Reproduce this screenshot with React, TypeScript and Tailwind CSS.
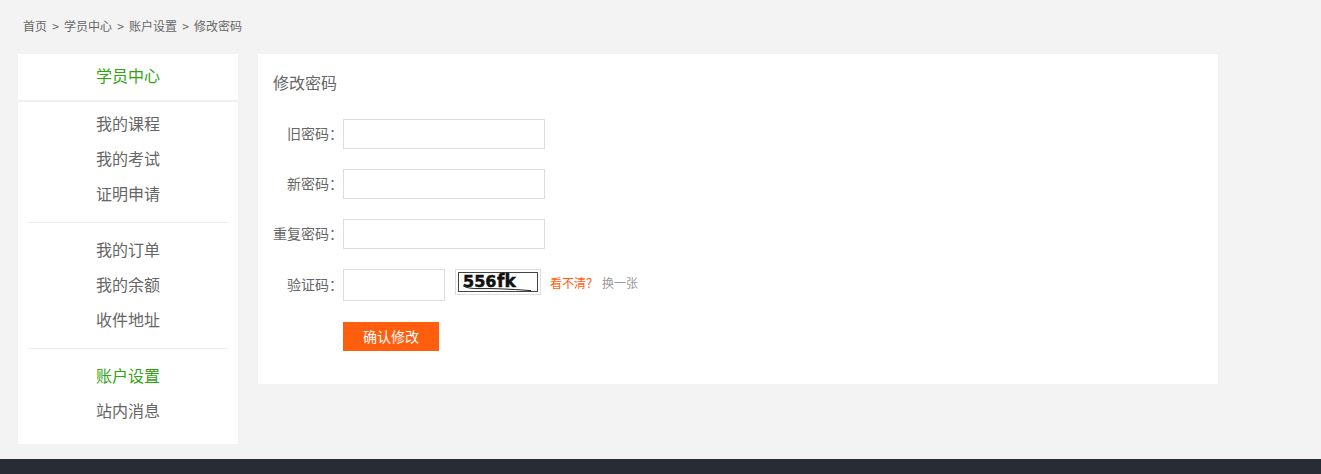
import { useState } from 'react'
import type { FormEvent } from 'react'

const breadcrumbs = ['首页', '学员中心', '账户设置', '修改密码']

const menuGroups = [
  ['我的课程', '我的考试', '证明申请'],
  ['我的订单', '我的余额', '收件地址'],
  ['账户设置', '站内消息'],
]

const passwordFields = [
  { id: 'oldPassword', label: '旧密码：' },
  { id: 'newPassword', label: '新密码：' },
  { id: 'repeatPassword', label: '重复密码：' },
]

function Breadcrumb() {
  return (
    <nav aria-label="breadcrumb" className="px-[5px] pt-[17px] pb-[19px] text-xs leading-[18px]">
      <ol className="flex">
        {breadcrumbs.map((item, index) => (
          <li key={item} className="flex">
            {index > 0 && <span className="w-[17px] text-center">&gt;</span>}
            <a href="#" className="hover:text-[#34a310]">
              {item}
            </a>
          </li>
        ))}
      </ol>
    </nav>
  )
}

function Sidebar() {
  const active = '账户设置'

  return (
    <aside className="w-[220px] shrink-0 bg-white pb-[5px] text-center text-base">
      <h2 className="border-b-2 border-[#f0f0f0] pb-1 leading-[42px] text-[#34a310]">
        学员中心
      </h2>
      <div className="px-[10px]">
        {menuGroups.map((group, index) => (
          <ul
            key={group[0]}
            className={
              index === 0 ? 'pt-[4px] pb-[11px]' : 'border-t border-[#ededed] pt-[9px] pb-[11px]'
            }
          >
            {group.map((item) => (
              <li key={item} className="leading-[35px]">
                <a
                  href="#"
                  className={item === active ? 'text-[#34a310]' : 'hover:text-[#34a310]'}
                >
                  {item}
                </a>
              </li>
            ))}
          </ul>
        ))}
      </div>
    </aside>
  )
}

function Captcha() {
  return (
    <svg role="img" aria-label="验证码" viewBox="0 0 80 20" className="h-5 w-20">
      <rect x="0.5" y="0.5" width="79" height="19" fill="#fff" stroke="#444" />
      <text
        x="5"
        y="15"
        fontFamily="'DejaVu Sans', 'Open Sans', sans-serif"
        fontSize="16"
        fontWeight="700"
        fill="#111"
        stroke="#111"
        strokeWidth="0.5"
      >
        556
        <tspan x="39" fontSize="17">
          fk
        </tspan>
      </text>
      <path d="M5 13.5 Q8 17 24 16.6 T73 18.6" fill="none" stroke="#222" strokeWidth="1" />
    </svg>
  )
}

export default function App() {
  const [code, setCode] = useState('')

  const handleSubmit = (e: FormEvent) => {
    e.preventDefault()
  }

  return (
    <div
      lang="zh-CN"
      className="flex min-h-screen flex-col bg-[#f3f3f3] font-['Noto_Sans_CJK_SC',sans-serif] text-[#666]"
    >
      <div className="ml-[18px] max-w-[1200px] pb-[15px]">
        <Breadcrumb />
        <div className="flex items-start gap-5">
          <Sidebar />
          <main className="flex-1 bg-white px-[15px] pt-[15px] pb-[33px]">
            <h1 className="text-base leading-[26px]">修改密码</h1>
            <form onSubmit={handleSubmit} className="mt-6 flex flex-col gap-5 text-sm">
              {passwordFields.map((field) => (
                <div key={field.id} className="flex items-start">
                  <label htmlFor={field.id} className="w-[70px] text-right leading-7">
                    {field.label}
                  </label>
                  <input
                    id={field.id}
                    type="password"
                    className="h-[30px] w-[202px] border border-[#ddd] px-2 outline-none"
                  />
                </div>
              ))}
              <div className="flex items-start pb-px">
                <label htmlFor="code" className="w-[70px] text-right leading-[30px]">
                  验证码：
                </label>
                <input
                  id="code"
                  type="text"
                  value={code}
                  onChange={(e) => setCode(e.target.value)}
                  className="h-8 w-[102px] border border-[#ddd] px-2 outline-none"
                />
                <span className="ml-[10px] border border-[#ddd] p-[2px]">
                  <Captcha />
                </span>
                <p className="ml-[9px] flex gap-1 text-xs leading-7">
                  <span className="text-[#ff5e0f]">看不清？</span>
                  <a href="#" className="text-[#999]">
                    换一张
                  </a>
                </p>
              </div>
              <button
                type="submit"
                className="ml-[70px] h-[29px] w-24 cursor-pointer bg-[#ff5e0f] pb-[2px] text-white"
              >
                确认修改
              </button>
            </form>
          </main>
        </div>
      </div>
      <footer className="min-h-[15px] flex-1 bg-[#282c34]" />
    </div>
  )
}
